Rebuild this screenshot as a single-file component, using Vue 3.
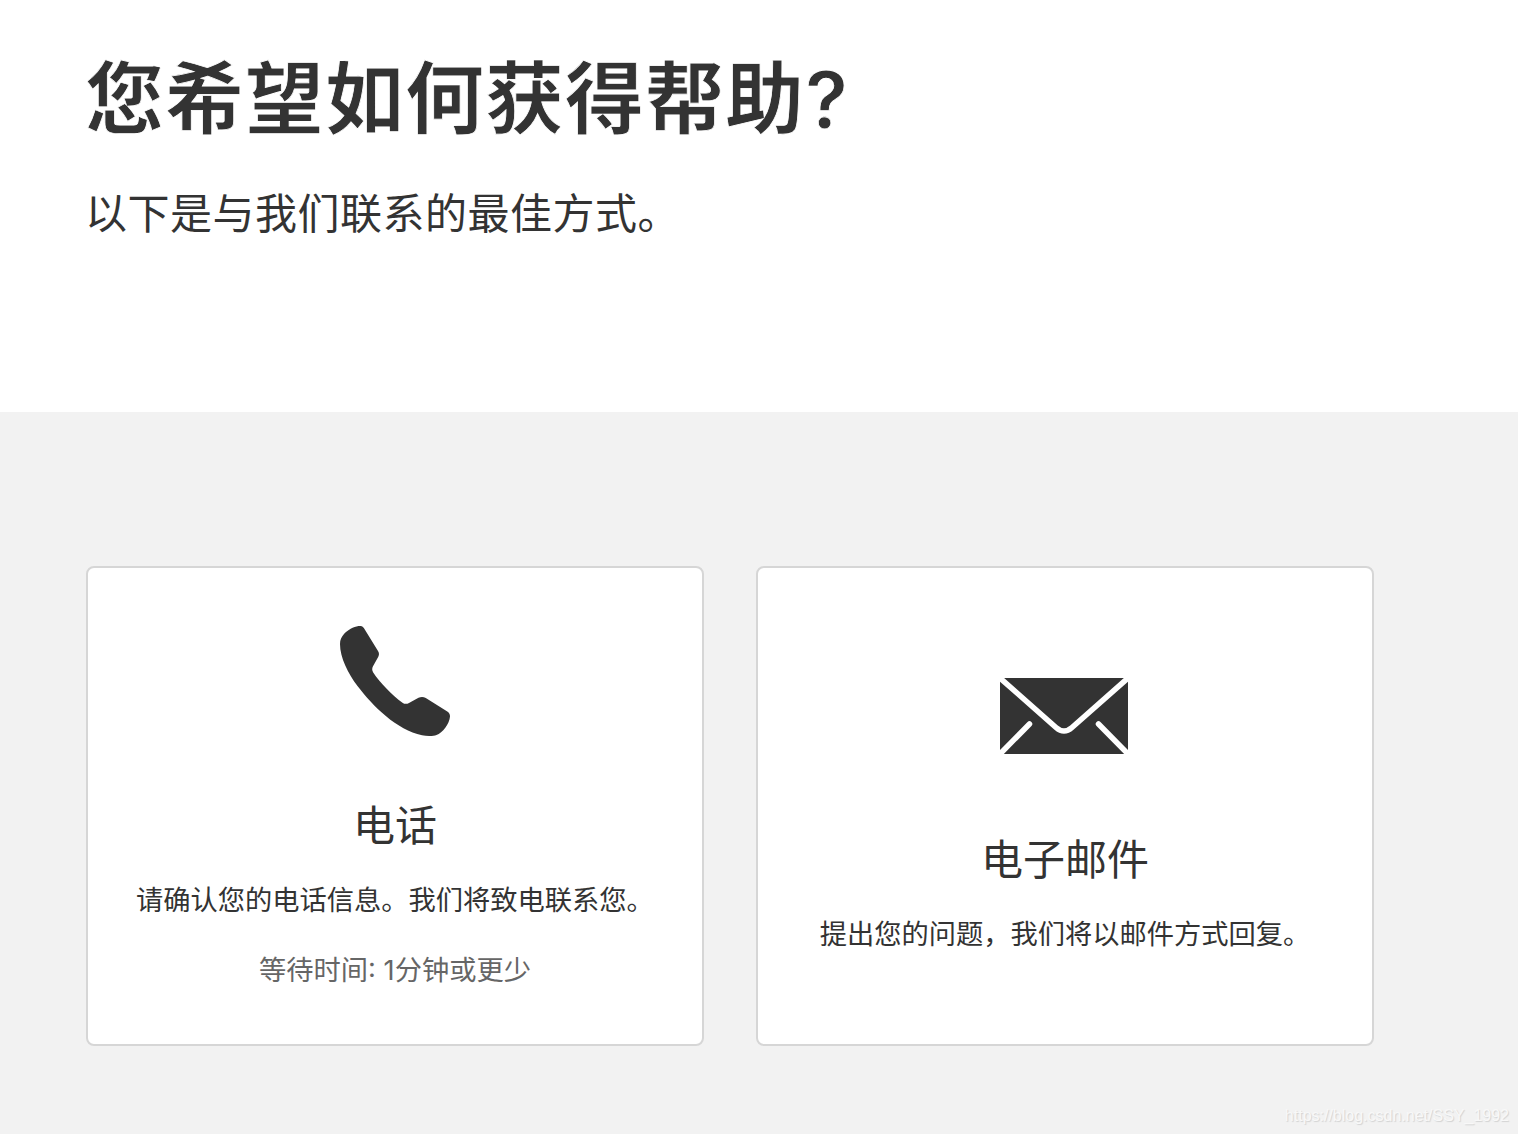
<script setup>
import { ref } from 'vue'

// Opciones de contacto que se muestran como tarjetas
const options = ref([
  { id: 'phone', title: '电话', text: '请确认您的电话信息。我们将致电联系您。', wait: '等待时间: 1分钟或更少' },
  { id: 'mail', title: '电子邮件', text: '提出您的问题，我们将以邮件方式回复。', wait: '' }
])
</script>

<template>
  <div class="help-page">
    <header class="intro">
      <h1>您希望如何获得帮助?</h1>
      <p>以下是与我们联系的最佳方式。</p>
    </header>

    <main class="contact">
      <div class="cards">
        <section v-for="option in options" :key="option.id" :class="['card', `card-${option.id}`]">
          <svg v-if="option.id === 'phone'" class="icon" width="110" height="110" viewBox="0 0 110 110">
            <path d="M18.5 0C21.5 0 22.6.2 24 2.3L38 25C39.2 27 39.3 28.6 38.3 30.7L33 40.3C31.9 42.3 31.9 44.4 33.2 46.4C40 56.500 52 69 62.500 76.700C64.500 78.200 66.800 78.200 69 77L78.500 71.800C81 70.600 83.500 70.700 85.800 72L107.300 85.500C109.300 86.800 110 88.300 110 90.500C109.500 98 102.500 106.800 96.500 109C93 110.300 87 110.300 82 109.200C57 104 33 80.500 17.500 60C8 47.400 0 31.500 0 18C0 13.500 1.500 11 4 8C7.500 4 13.500.7 18.500 0Z" />
          </svg>
          <svg v-else class="icon" width="128" height="76" viewBox="0 0 128 76">
            <rect width="128" height="76" />
            <path class="fold" d="M0 0L56 49.500Q64 56.500 72 49.500L128 0M0 76L29.500 46M128 76L98.500 46" />
          </svg>

          <h2>{{ option.title }}</h2>
          <p class="description">{{ option.text }}</p>
          <p v-if="option.wait" class="wait">{{ option.wait }}</p>
        </section>
      </div>

      <span class="watermark">https://blog.csdn.net/SSY_1992</span>
    </main>
  </div>
</template>

<style>
body {
  margin: 0;
}
</style>

<style scoped>
.help-page {
  display: flex;
  flex-direction: column;
  height: 1134px;
  overflow: hidden;
  background: #fff;
  color: #333;
  font-family: Inter, "Noto Sans CJK SC", sans-serif;
}

h1,
h2,
p {
  margin: 0;
  font-weight: 400;
  white-space: nowrap;
}

.intro {
  box-sizing: border-box;
  height: 412px;
  padding: 43px 85px 0;
}

.intro h1 {
  font-size: 79px;
  font-weight: 600;
  letter-spacing: 1px;
  line-height: 112px;
  -webkit-text-stroke: 0.8px #fff;
}

.intro p {
  margin-top: 28px;
  font-size: 42px;
  letter-spacing: 0.5px;
  line-height: 62px;
}

.contact {
  display: flex;
  flex: 1;
  flex-direction: column;
  justify-content: space-between;
  padding: 154px 9px 7px 86px;
  background: #f2f2f2;
}

.cards {
  display: flex;
  gap: 52px;
}

.card {
  display: flex;
  flex-direction: column;
  align-items: center;
  box-sizing: border-box;
  width: 618px;
  height: 480px;
  border: 2px solid #d6d6d6;
  border-radius: 8px;
  background: #fff;
}

.card-phone {
  padding-top: 58px;
}

.card-mail {
  padding-top: 110px;
}

.icon {
  display: block;
  fill: #333;
}

.card-mail .icon {
  margin-right: 2px;
}

.fold {
  fill: none;
  stroke: #fff;
  stroke-width: 5.5;
  stroke-linecap: round;
}

.card h2 {
  margin-top: 60px;
  font-size: 42px;
  line-height: 60px;
}

.card-mail h2 {
  margin-top: 76px;
}

.description,
.wait {
  font-size: 27.25px;
  line-height: 40px;
}

.description {
  margin-top: 25px;
}

.wait {
  margin-top: 30px;
  color: #666;
}

.watermark {
  align-self: flex-end;
  color: #f8f8f8;
  font-family: "Liberation Sans", Arial, sans-serif;
  font-size: 16px;
  line-height: 22px;
  text-shadow: 1px 1px 1px #d2d2d2;
}
</style>
